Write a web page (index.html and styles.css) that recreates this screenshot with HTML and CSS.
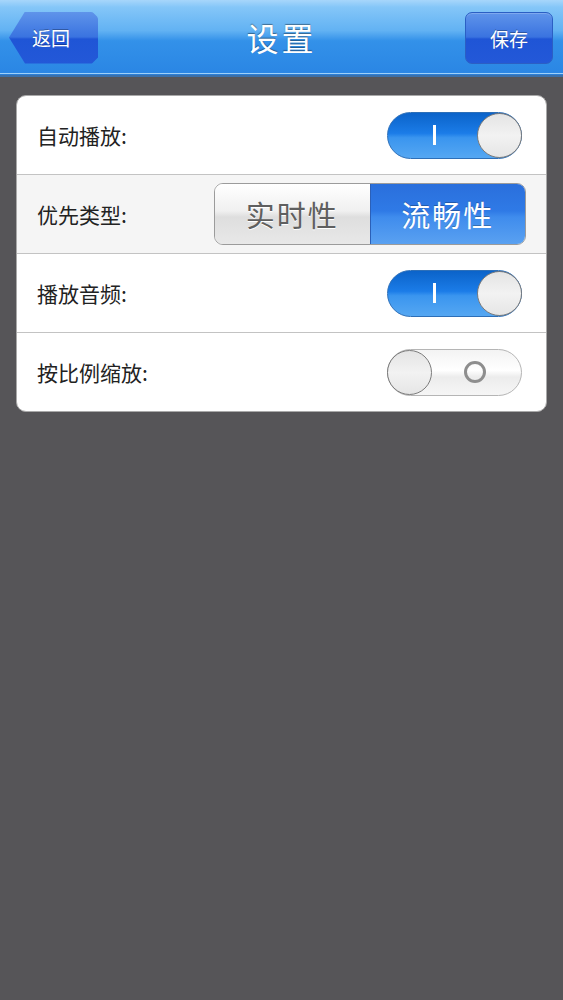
FILE: index.html
```html
<!DOCTYPE html>
<html lang="zh-CN">
<head>
    <meta charset="UTF-8">
    <meta name="viewport" content="width=device-width, initial-scale=1.0">
    <title>设置</title>
    <link rel="stylesheet" href="styles.css">
</head>
<body>
    <div class="navbar">
        <button class="nav-btn back-btn"><span>返回</span></button>
        <h1 class="nav-title">设置</h1>
        <button class="nav-btn save-btn">保存</button>
    </div>

    <div class="settings">
        <div class="row">
            <span class="label">自动播放:</span>
            <div class="switch on"><span class="mark-on"></span><span class="knob"></span></div>
        </div>
        <div class="row alt">
            <span class="label">优先类型:</span>
            <div class="segment">
                <span class="seg-item">实时性</span>
                <span class="seg-item active">流畅性</span>
            </div>
        </div>
        <div class="row">
            <span class="label">播放音频:</span>
            <div class="switch on"><span class="mark-on"></span><span class="knob"></span></div>
        </div>
        <div class="row">
            <span class="label">按比例缩放:</span>
            <div class="switch off"><span class="knob"></span><span class="mark-off"></span></div>
        </div>
    </div>
</body>
</html>
```

FILE: styles.css
```css
html, body {
    margin: 0;
    padding: 0;
}
body {
    font-family: "Noto Sans CJK SC", "Noto Sans", sans-serif;
    background-color: #565558;
    min-height: 1000px;
}
.navbar {
    height: 73px;
    display: flex;
    align-items: center;
    justify-content: space-between;
    padding: 0 10px 0 9px;
    background: linear-gradient(to bottom, #a7d6fb 0%, #84c6f8 10%, #62b2f3 42%, #3391e9 56%, #2a86e4 100%);
    border-bottom: 1px solid #9fd0f8;
    box-shadow: 0 1px 0 #2c7fd6, 0 3px 0 #3b6fa8;
    position: relative;
}
.nav-btn {
    height: 52px;
    width: 88px;
    border: 1px solid #2b5fc4;
    border-radius: 7px;
    background: linear-gradient(to bottom, #5f94ea 0%, #3a73e0 48%, #1f55d6 52%, #2358d8 100%);
    color: #fff;
    font-family: inherit;
    font-size: 19px;
    padding: 0;
    text-shadow: 0 -1px 0 rgba(0,0,0,0.3);
    box-shadow: inset 0 1px 0 rgba(255,255,255,0.2);
}
.back-btn {
    width: 89px;
    margin-top: 2px;
    border: none;
    background: none;
    box-shadow: none;
    position: relative;
    text-align: left;
}
.back-btn::before {
    content: "";
    position: absolute;
    left: 0;
    top: 0;
    width: 100%;
    height: 100%;
    background: linear-gradient(to bottom, #5f94ea 0%, #3a73e0 48%, #1f55d6 52%, #2358d8 100%);
    clip-path: polygon(16px 0, calc(100% - 6px) 0, 100% 6px, 100% calc(100% - 6px), calc(100% - 6px) 100%, 16px 100%, 0 50%);
    border-radius: 0 7px 7px 0;
}
.back-btn span {
    position: relative;
    margin-left: 23px;
}
.nav-title {
    position: absolute;
    left: 0;
    right: 0;
    margin: 0;
    text-align: center;
    color: #fff;
    font-size: 32px;
    font-weight: 400;
    letter-spacing: 3px;
    text-shadow: 0 -1px 1px rgba(0,0,0,0.4);
    pointer-events: none;
}
.save-btn {
    margin-top: 3px;
}
.settings {
    margin: 21px 16px 0 16px;
    background: #fff;
    border: 1px solid #a9a9a9;
    border-radius: 10px;
    overflow: hidden;
}
.row {
    height: 78px;
    display: flex;
    align-items: center;
    justify-content: space-between;
    padding: 0 22px 0 20px;
    border-top: 1px solid #c3c3c3;
}
.row:first-child {
    border-top: none;
    height: 78px;
}
.row.alt {
    background: #f5f5f5;
}
.label {
    font-size: 21px;
    color: #222;
}
.switch {
    width: 133px;
    height: 45px;
    border-radius: 24px;
    border: 1px solid #8a8a8a;
    display: flex;
    align-items: center;
    position: relative;
}
.switch.on {
    background: linear-gradient(to bottom, #0b63c9 0%, #1b7ce8 45%, #3a95ef 55%, #55a7f2 100%);
    border-color: #2d6fb8;
    justify-content: flex-end;
    margin-right: 2px;
}
.switch.off {
    background: linear-gradient(to bottom, #f3f3f3 0%, #ffffff 45%, #ececec 60%, #f6f6f6 100%);
    border-color: #b5b5b5;
    margin-right: 2px;
}
.knob {
    width: 45px;
    height: 45px;
    border-radius: 50%;
    border: 1px solid #7c7c7c;
    background: linear-gradient(to bottom, #e4e4e4 0%, #f2f2f2 50%, #e6e6e6 100%);
    box-sizing: border-box;
    margin: 0 -1px;
    flex: none;
}
.mark-on {
    position: absolute;
    left: 45px;
    width: 3px;
    height: 20px;
    background: #fff;
    top: 12px;
}
.mark-off {
    position: absolute;
    left: 76px;
    top: 11px;
    width: 22px;
    height: 22px;
    border: 3px solid #8e8e8e;
    border-radius: 50%;
    box-sizing: border-box;
}
.segment {
    display: flex;
    height: 60px;
    width: 310px;
    border-radius: 9px;
    overflow: hidden;
    border: 1px solid #9b9b9b;
    margin-right: -2px;
}
.seg-item {
    flex: 1;
    display: flex;
    align-items: center;
    justify-content: center;
    font-size: 29px;
    letter-spacing: 2px;
}
.seg-item:first-child {
    color: #5f5f5f;
    background: linear-gradient(to bottom, #ffffff 0%, #f0f0f0 45%, #dedede 55%, #e8e8e8 100%);
    text-shadow: 0 1px 0 #fff;
}
.seg-item.active {
    color: #fff;
    background: linear-gradient(to bottom, #2a6fdc 0%, #2f7ae6 45%, #3f8ced 55%, #5aa1f1 100%);
    border-left: 1px solid #2b60b8;
    text-shadow: 0 -1px 0 rgba(0,0,0,0.25);
}
```
